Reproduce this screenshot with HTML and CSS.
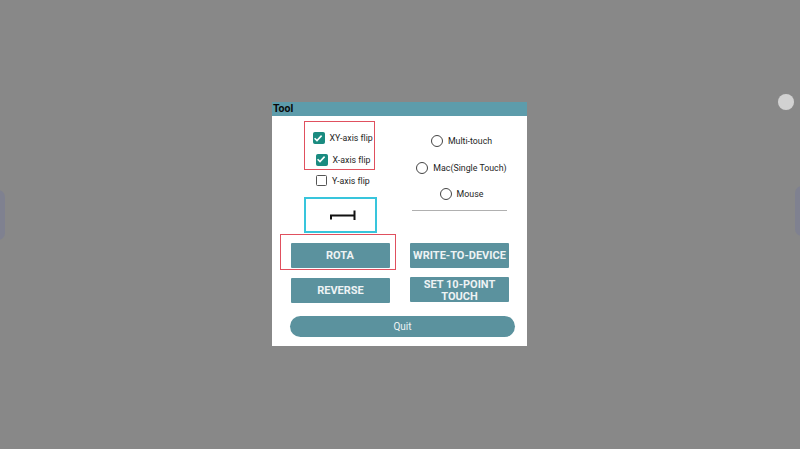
FILE: index.html
```html
<!DOCTYPE html>
<html>
<head>
<meta charset="utf-8">
<link rel="stylesheet" href="styles.css">
</head>
<body>
<div class="edge edge-left"></div>
<div class="edge edge-right"></div>
<div class="float-dot"></div>
<div class="dialog">
  <div class="title">Tool</div>
  <div class="top">
    <div class="left">
      <div class="redbox">
        <div class="cb cb-xy"><span class="box checked"><svg viewBox="0 0 12 12"><polyline points="2.6,6.2 5,8.6 9.6,3.6"/></svg></span><span>XY-axis flip</span></div>
        <div class="cb cb-x"><span class="box checked"><svg viewBox="0 0 12 12"><polyline points="2.6,6.2 5,8.6 9.6,3.6"/></svg></span><span>X-axis flip</span></div>
      </div>
      <div class="cb cb-y"><span class="box"></span><span>Y-axis flip</span></div>
      <div class="cyanbox">
        <svg viewBox="0 0 69 32"><path d="M24 16.5H49M48.5 11.5V21M25 16V20.5"/></svg>
      </div>
    </div>
    <div class="right">
      <div class="radio"><span class="ring"></span><span>Multi-touch</span></div>
      <div class="radio"><span class="ring"></span><span>Mac(Single Touch)</span></div>
      <div class="radio"><span class="ring"></span><span>Mouse</span></div>
      <div class="rule"></div>
    </div>
  </div>
  <div class="btn-grid">
    <div class="redbox2"><div class="btn">ROTA</div></div>
    <div class="btn btn-write">WRITE-TO-DEVICE</div>
    <div class="btn btn-reverse">REVERSE</div>
    <div class="btn btn-set">SET 10-POINT TOUCH</div>
  </div>
  <div class="quit">Quit</div>
</div>
</body>
</html>
```
FILE: styles.css
```css
html, body {
  margin: 0;
  padding: 0;
}
body {
  width: 800px;
  height: 449px;
  background: #888888;
  display: flex;
  align-items: center;
  justify-content: center;
  font-family: Roboto, "Liberation Sans", sans-serif;
  font-variant-ligatures: none;
  overflow: hidden;
  position: relative;
}
.edge {
  position: absolute;
  width: 14px;
  height: 50px;
  border-radius: 7px;
  background: #7f8190;
}
.edge-left { left: -9px; top: 190px; }
.edge-right { right: -9px; top: 186px; }
.float-dot {
  position: absolute;
  left: 778px;
  top: 94px;
  width: 16px;
  height: 16px;
  border-radius: 50%;
  background: #d2d2d2;
  box-shadow: 0 0 1px #9a9a9a;
}
.dialog {
  width: 255px;
  height: 244px;
  background: #ffffff;
  display: flex;
  flex-direction: column;
  margin-top: -1px;
  margin-left: -1px;
}
.title {
  height: 14px;
  line-height: 14px;
  background: #5d9cab;
  color: #0a0a0a;
  font-weight: bold;
  font-size: 10.5px;
  padding-left: 1px;
}
.top {
  display: grid;
  grid-template-columns: 128px 127px;
  height: 118px;
}
.left {
  display: flex;
  flex-direction: column;
  align-items: flex-start;
  padding-left: 32px;
}
.redbox {
  margin-top: 5px;
  width: 71px;
  height: 49px;
  box-sizing: border-box;
  border: 1.5px solid #e0505e;
  display: flex;
  flex-direction: column;
}
.cb {
  display: flex;
  align-items: center;
  font-size: 8.8px;
  color: #1e1e1e;
  height: 12px;
}
.cb .box {
  width: 12px;
  height: 12px;
  box-sizing: border-box;
  border: 1.5px solid #555;
  border-radius: 1.5px;
  margin-right: 5px;
  flex: none;
  background: #fff;
}
.cb .box.checked {
  background: #1a8b80;
  border-color: #1a8b80;
}
.cb .box svg {
  display: block;
  margin: -1.5px;
  width: 12px;
  height: 12px;
}
.cb .box svg polyline {
  fill: none;
  stroke: #fff;
  stroke-width: 1.6;
}
.cb-xy { margin-top: 10px; margin-left: 7.5px; }
.cb-x { margin-top: 9.5px; margin-left: 10.5px; }
.cb-y { margin-top: 4.5px; margin-left: 12px; }
.cb-y .box { width: 11px; height: 11px; margin-right: 5px; }
.cyanbox {
  margin-top: 10px;
  width: 73px;
  height: 36px;
  box-sizing: border-box;
  border: 2px solid #38c5dc;
}
.cyanbox svg {
  display: block;
  width: 69px;
  height: 32px;
}
.cyanbox svg path {
  fill: none;
  stroke: #111;
  stroke-width: 2;
}
.right {
  display: flex;
  flex-direction: column;
  align-items: center;
  padding-right: 4px;
  padding-top: 19px;
}
.radio {
  display: flex;
  align-items: center;
  font-size: 8.8px;
  color: #1e1e1e;
  height: 12px;
  margin-bottom: 14.5px;
}
.radio .ring {
  width: 12px;
  height: 12px;
  box-sizing: border-box;
  border: 1.5px solid #444;
  border-radius: 50%;
  margin-right: 5px;
}
.radio:nth-child(3) { margin-bottom: 0; }
.rule {
  margin-top: 10px;
  width: 95px;
  height: 1px;
  background: #b0b0b0;
  margin-left: -4px;
}
.btn-grid {
  display: grid;
  grid-template-columns: 130px 117px;
  padding-left: 8px;
  align-items: start;
}
.btn {
  width: 99px;
  height: 25px;
  background: #5b929e;
  color: #eef3f4;
  font-weight: bold;
  font-size: 11px;
  display: flex;
  align-items: center;
  justify-content: center;
  text-align: center;
  box-sizing: border-box;
  border-radius: 1px;
  overflow: hidden;
}
.redbox2 {
  width: 116px;
  height: 36px;
  box-sizing: border-box;
  border: 1.5px solid #e0505e;
  padding-left: 9.5px;
  padding-top: 7.5px;
}
.btn-write { margin-top: 9px; }
.btn-reverse { margin-top: 8px; margin-left: 11px; }
.btn-set {
  margin-top: 7px;
  align-items: flex-start;
  line-height: 12.5px;
  padding-top: 1.5px;
}
.quit {
  margin-top: 13px;
  margin-left: 18px;
  width: 225px;
  height: 21px;
  border-radius: 10.5px;
  background: #5b929e;
  color: #eef3f4;
  font-size: 10px;
  display: flex;
  align-items: center;
  justify-content: center;
}
```
